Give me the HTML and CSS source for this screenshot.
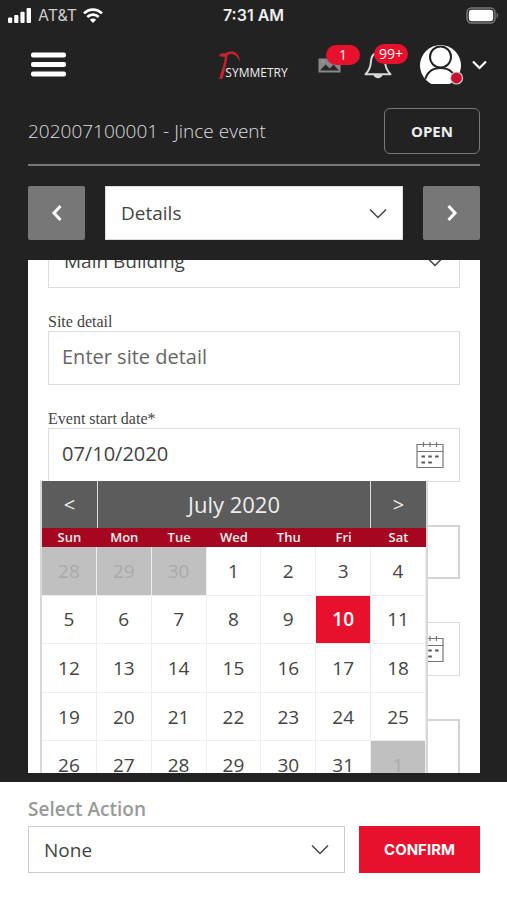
FILE: index.html
```html
<!DOCTYPE html>
<html lang="en">
<head>
<meta charset="utf-8">
<meta name="viewport" content="width=device-width, initial-scale=1">
<title>Symmetry - Event details</title>
<link rel="stylesheet" href="styles.css">
</head>
<body>
<div class="status-bar">
  <div class="carrier">
    <svg width="24" height="15" viewBox="0 0 24 15" fill="#fff" aria-hidden="true"><rect x="0" y="9.5" width="4.2" height="5.5" rx="1"/><rect x="6.2" y="7" width="4.2" height="8" rx="1"/><rect x="12.4" y="3.8" width="4.2" height="11.2" rx="1"/><rect x="18.6" y="0" width="4.4" height="15" rx="1"/></svg>
    <span>AT&amp;T</span>
    <svg width="20" height="15" viewBox="0 0 20 15" fill="none" stroke="#fff" stroke-width="2.7" aria-hidden="true"><path d="M1 5.4C6 .3 14 .3 19 5.4"/><path d="M4.3 9C7.6 5.7 12.4 5.7 15.7 9"/><path d="M10 15 6.9 11.7C8.7 10 11.3 10 13.1 11.7Z" fill="#fff" stroke="none"/></svg>
  </div>
  <time class="clock">7:31 AM</time>
  <svg class="battery" width="33" height="17" viewBox="0 0 33 17" aria-hidden="true"><rect x="1" y="1" width="28" height="15" rx="4.5" fill="none" stroke="#777" stroke-width="1.5"/><rect x="2.8" y="2.8" width="24.4" height="11.4" rx="3" fill="#fff"/><path d="M30.6 5.6c2 1 2 4.800 0 5.800z" fill="#777"/></svg>
</div>

<nav class="nav-bar">
  <button class="menu-button" type="button" aria-label="Menu">
    <svg width="35" height="26" viewBox="0 0 35 26" fill="#fff" aria-hidden="true"><rect y="0.500" width="35" height="5" rx="2"/><rect y="10" width="35" height="5" rx="2"/><rect y="19.500" width="35" height="5" rx="2"/></svg>
  </button>
  <a class="logo" href="#" aria-label="Symmetry">
    <svg width="22" height="28" viewBox="0 0 22 28" aria-hidden="true"><path d="M0 4.500C1 2.500 3.500 2 6 2.600C9 .2 14 -.3 17 2C20 4.300 21 7.500 20.500 10.500C19.300 7 17.500 4.400 14 3.300C11.500 2.600 9.500 3 8.300 5C7.800 12 5.500 19 3.800 27.500L0 28C2.300 20.500 5 13.500 6 6.300C4 5.300 2 6.300 0 4.500Z" fill="#c8232c"/></svg>
    <span>SYMMETRY</span>
  </a>
  <div class="nav-tools">
    <button class="tool media" type="button" aria-label="Media">
      <svg width="23" height="15" viewBox="0 0 23 15" aria-hidden="true"><rect x="0.500" y="0.500" width="22" height="14" fill="#888"/><path d="M2 12.500 7.500 6.500 12 10.500 15.500 6.500 21 12.500Z" fill="#282828"/><circle cx="5" cy="3.800" r="1.500" fill="#999"/></svg>
      <span class="badge">1</span>
    </button>
    <button class="tool alerts" type="button" aria-label="Notifications">
      <svg width="28" height="28" viewBox="0 0 28 28" aria-hidden="true"><path d="M14 2C8.500 2 7.300 6 7 10C6.700 16 5.500 19.500 1.500 23.200H26.500C22.500 19.500 21.300 16 21 10C20.700 6 19.500 2 14 2Z" fill="none" stroke="#d8d8d8" stroke-width="2" stroke-linejoin="round"/><path d="M9.500 24H18.500C17.500 28.200 10.500 28.200 9.500 24Z" fill="#d8d8d8"/></svg>
      <span class="badge">99+</span>
    </button>
    <button class="profile" type="button" aria-label="Profile">
      <svg width="44" height="40" viewBox="0 0 44 40" aria-hidden="true"><clipPath id="face"><circle cx="20.500" cy="20.500" r="20.500"/></clipPath><g clip-path="url(#face)"><rect width="42" height="39" fill="#fff"/><circle cx="20.500" cy="12" r="10.500" fill="none" stroke="#222" stroke-width="2"/><path d="M4.500 37C6.500 27 13 23 20.500 23S34.500 27 36.500 37" fill="none" stroke="#222" stroke-width="2"/></g><circle cx="36.500" cy="33" r="6" fill="#c8102e" stroke="#ccc" stroke-width="1.200"/></svg>
      <svg width="15" height="10" viewBox="0 0 15 10" fill="none" stroke="#fff" stroke-width="2.200" aria-hidden="true"><path d="M1 1.500 7.500 8 14 1.500"/></svg>
    </button>
  </div>
</nav>

<main class="content">
  <header class="event-header">
    <h1>202007100001 - Jince event</h1>
    <button class="open-button" type="button">OPEN</button>
  </header>

  <div class="section-switch">
    <button class="step" type="button" aria-label="Previous section"><svg width="12" height="18" viewBox="0 0 12 18" aria-hidden="true"><path d="M9.500 2 3 9 9.500 16"/></svg></button>
    <div class="select-box">
      <select aria-label="Section"><option>Details</option></select>
      <svg width="18" height="11" viewBox="0 0 18 11" aria-hidden="true"><path d="M1 1.500 9 9.500 17 1.500"/></svg>
    </div>
    <button class="step" type="button" aria-label="Next section"><svg width="12" height="18" viewBox="0 0 12 18" aria-hidden="true"><path d="M2.500 2 9 9 2.500 16"/></svg></button>
  </div>

  <form class="panel">
    <div class="field first">
      <div class="select-box">
        <select aria-label="Site"><option>Main Building</option></select>
        <svg width="18" height="11" viewBox="0 0 18 11" aria-hidden="true"><path d="M1 1.500 9 9.500 17 1.500"/></svg>
      </div>
    </div>
    <div class="field">
      <label for="site-detail">Site detail</label>
      <input id="site-detail" type="text" placeholder="Enter site detail">
    </div>
    <div class="field">
      <label for="start-date">Event start date*</label>
      <div class="date-box">
        <input id="start-date" type="text" value="07/10/2020">
        <svg width="28" height="28" viewBox="0 0 28 28" aria-hidden="true"><use href="#calendar"/></svg>
        <div class="picker">
          <div class="picker-head">
            <button type="button" aria-label="Previous month">&lt;</button>
            <span>July 2020</span>
            <button type="button" aria-label="Next month">&gt;</button>
          </div>
          <table>
            <thead><tr><th>Sun</th><th>Mon</th><th>Tue</th><th>Wed</th><th>Thu</th><th>Fri</th><th>Sat</th></tr></thead>
            <tbody>
              <tr><td class="out">28</td><td class="out">29</td><td class="out">30</td><td>1</td><td>2</td><td>3</td><td>4</td></tr>
              <tr><td>5</td><td>6</td><td>7</td><td>8</td><td>9</td><td class="chosen">10</td><td>11</td></tr>
              <tr><td>12</td><td>13</td><td>14</td><td>15</td><td>16</td><td>17</td><td>18</td></tr>
              <tr><td>19</td><td>20</td><td>21</td><td>22</td><td>23</td><td>24</td><td>25</td></tr>
              <tr><td>26</td><td>27</td><td>28</td><td>29</td><td>30</td><td>31</td><td class="out">1</td></tr>
            </tbody>
          </table>
        </div>
      </div>
    </div>
    <div class="field unlabelled"><input class="heavy" type="text" aria-label="Event start time"></div>
    <div class="field unlabelled">
      <div class="date-box">
        <input type="text" aria-label="Event end date">
        <svg width="28" height="28" viewBox="0 0 28 28" aria-hidden="true"><use href="#calendar"/></svg>
      </div>
    </div>
    <div class="field unlabelled"><textarea class="heavy" aria-label="Description"></textarea></div>
  </form>
</main>

<footer class="action-bar">
  <label for="action">Select Action</label>
  <div class="action-row">
    <div class="select-box">
      <select id="action"><option>None</option></select>
      <svg width="18" height="11" viewBox="0 0 18 11" aria-hidden="true"><path d="M1 1.500 9 9.500 17 1.500"/></svg>
    </div>
    <button class="confirm" type="button">CONFIRM</button>
  </div>
</footer>

<svg class="symbols" width="0" height="0" aria-hidden="true">
  <symbol id="calendar" viewBox="0 0 28 28"><path d="M1 3.500H27V26.500H1ZM1 10.500H27M7.500 1V6M14 1V6M20.500 1V6" fill="none" stroke="#777" stroke-width="1.200"/><path d="M5.500 15.500h3.500M12.300 15.500h3.500M19.100 15.500h3.500M5.500 21.500h3.500M12.300 21.500h3.500" stroke="#555" stroke-width="2"/></symbol>
</svg>
</body>
</html>
```
FILE: styles.css
```css
* {
  box-sizing: border-box;
}

body {
  margin: 0;
  height: 100vh;
  display: flex;
  flex-direction: column;
  background: #222;
  color: #444;
  font-family: "Open Sans", "Noto Sans", sans-serif;
  font-size: 19px;
}

button,
input,
select,
textarea {
  font: inherit;
  color: inherit;
  margin: 0;
  border-radius: 0;
}

button {
  padding: 0;
  border: 0;
  background: none;
  display: flex;
  align-items: center;
  justify-content: center;
}

.symbols {
  position: absolute;
}

/* Phone status bar */
.status-bar {
  display: grid;
  grid-template-columns: 1fr auto 1fr;
  align-items: center;
  height: 30px;
  padding: 0 8px;
  color: #eee;
  font-family: Inter, sans-serif;
  font-size: 16px;
}

.carrier {
  display: flex;
  align-items: center;
  gap: 6px;
  color: #ccc;
}

.clock {
  font-weight: 600;
}

.battery {
  justify-self: end;
}

/* App bar */
.nav-bar {
  display: grid;
  grid-template-columns: 1fr auto 1fr;
  align-items: center;
  height: 70px;
  padding: 0 20px;
}

.menu-button {
  justify-self: start;
  padding: 0 11px;
}

.logo {
  display: flex;
  align-items: flex-end;
  color: #eee;
  text-decoration: none;
}

.logo span {
  margin-left: -16px;
  font-family: "Open Sans", sans-serif;
  font-size: 12px;
  line-height: 12px;
}

.nav-tools {
  display: flex;
  align-items: center;
  justify-content: flex-end;
}

.tool {
  position: relative;
}

.media {
  margin-right: 23px;
}

.alerts {
  margin-right: 28px;
}

.badge {
  position: absolute;
  left: 8px;
  width: 34px;
  height: 20px;
  border-radius: 10px;
  background: #e8112d;
  color: #fff;
  font-size: 14px;
  line-height: 20px;
  text-align: center;
}

.media .badge {
  bottom: 8px;
}

.alerts .badge {
  left: 10px;
  bottom: 15px;
}

.profile {
  gap: 8px;
}

/* Event content */
.content {
  flex: 1;
  min-height: 0;
  display: flex;
  flex-direction: column;
  padding: 8px 27px 9px 28px;
}

.event-header {
  display: flex;
  align-items: center;
  justify-content: space-between;
  padding-bottom: 10px;
  border-bottom: 2px solid #777;
}

.event-header h1 {
  margin: 0;
  color: #ddd;
  font-size: 19px;
  font-weight: 300;
}

.open-button {
  width: 96px;
  height: 46px;
  border: 1px solid #777;
  border-radius: 6px;
  color: #eee;
  font-size: 15px;
  font-weight: 700;
}

.section-switch {
  display: grid;
  grid-template-columns: 57px 1fr 57px;
  gap: 20px;
  padding: 20px 0;
}

.step {
  border-radius: 2px;
  background: #777;
}

.step path {
  fill: none;
  stroke: #fff;
  stroke-width: 3;
}

/* Controls */
.select-box,
.date-box {
  display: grid;
  align-items: center;
}

.select-box > select,
.select-box > svg,
.date-box > input,
.date-box > svg {
  grid-area: 1 / 1;
}

.select-box > svg,
.date-box > svg {
  justify-self: end;
  margin-right: 16px;
  pointer-events: none;
}

.select-box path {
  fill: none;
  stroke: #444;
  stroke-width: 1.5;
}

select {
  appearance: none;
  width: 100%;
  height: 54px;
  padding: 0 15px;
  border: 1px solid #ddd;
  background: #fff;
}

.panel input,
.panel textarea {
  display: block;
  width: 100%;
  height: 54px;
  padding: 0 13px 3px;
  border: 1px solid #ddd;
  background: #fff;
  font-size: 20px;
}

.panel input::placeholder {
  color: #666;
  opacity: 1;
}

.panel .heavy {
  border: 2px solid #d4d4d4;
}

.panel textarea {
  height: 108px;
  resize: none;
}

/* Scrolled form */
.panel {
  flex: 1;
  min-height: 0;
  overflow: hidden;
  padding: 0 20px;
  background: #fff;
}

.field {
  margin-bottom: 24px;
}

.field.first {
  margin-top: -26px;
}

.field label {
  display: block;
  font-family: "Liberation Serif", serif;
  font-size: 16px;
  line-height: 19px;
}

.unlabelled {
  padding-top: 19px;
}

.date-box {
  position: relative;
}

/* Calendar drop-down */
.picker {
  position: absolute;
  z-index: 1;
  top: 53px;
  left: -8px;
  width: 388px;
  border: solid #d8d8d8;
  border-width: 0 2px;
  background: #fff;
}

.picker-head {
  display: grid;
  grid-template-columns: 55px 1fr 55px;
  height: 47px;
  background: #5c5c5c;
  color: #eee;
  font-size: 22px;
  line-height: 47px;
  text-align: center;
}

.picker-head span {
  border: solid #ddd;
  border-width: 0 1px;
}

.picker-head button {
  font-size: 20px;
}

.picker table {
  width: 100%;
  height: 262px;
  table-layout: fixed;
  border-spacing: 0;
  text-align: center;
}

.picker th {
  height: 19px;
  padding: 0;
  background: #a50620;
  color: #eee;
  font-size: 13px;
  font-weight: 600;
  line-height: 19px;
}

.picker td {
  padding: 0;
  border: solid #eee;
  border-width: 0 1px 1px 0;
}

.picker .out {
  background: #c0c0c0;
  color: #aaa;
}

.picker .chosen {
  background: #e8112d;
  color: #fff;
  font-weight: 600;
}

/* Action bar */
.action-bar {
  padding: 15px 27px 27px 28px;
  background: #fff;
}

.action-bar label {
  display: block;
  margin-bottom: 5px;
  color: #999;
  font-size: 19px;
  font-weight: 600;
  line-height: 24px;
}

.action-row {
  display: grid;
  grid-template-columns: 1fr 121px;
  gap: 14px;
}

.action-row select {
  height: 47px;
  border-color: #ccc;
}

.confirm {
  background: #e8112d;
  color: #fff;
  font-family: Inter, sans-serif;
  font-size: 15px;
  font-weight: 700;
}
```
